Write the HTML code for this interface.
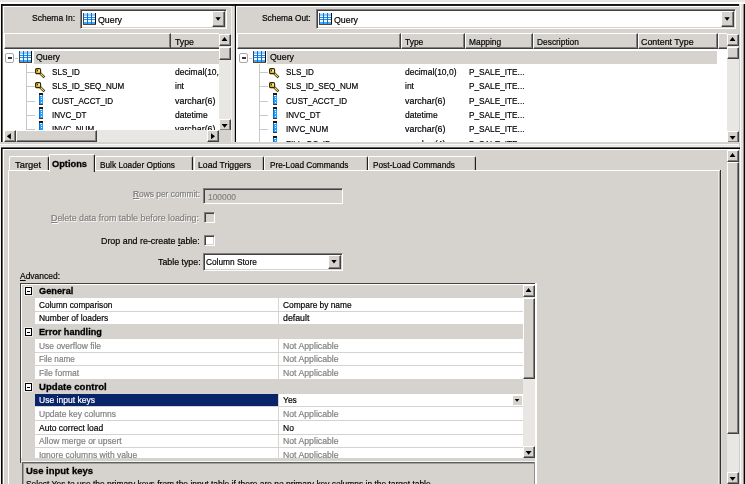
<!DOCTYPE html>
<html><head><meta charset="utf-8"><style>
*{margin:0;padding:0;box-sizing:border-box}
html,body{width:745px;height:484px;overflow:hidden;background:#d6d3ce;position:relative}
div{position:absolute}
svg{display:block}
.t{font-family:"Liberation Sans",sans-serif;font-size:9.5px;line-height:11px;transform-origin:0 0;white-space:nowrap;color:#000;-webkit-text-stroke:0.2px #000}
.b{font-weight:bold;-webkit-text-stroke-width:0.3px}
.dis{color:#808080;-webkit-text-stroke-color:#808080;text-shadow:1px 1px 0 #fff}
.gr{color:#808080;-webkit-text-stroke-color:#808080}
.wh{background:#fff}
.blk{background:#000}
.dk{background:#404040}
.face{background:#d6d3ce}
.btn{background:#d6d3ce;border-top:1px solid #fff;border-left:1px solid #fff;border-right:1px solid #404040;border-bottom:1px solid #404040;box-shadow:inset -1px -1px 0 #808080}
.track{background:#e8e7e4}
.hdr{background:#d6d3ce;border-top:1px solid #fff;border-left:1px solid #fff;border-right:1px solid #404040;border-bottom:1px solid #404040;box-shadow:inset -1px -1px 0 #808080}
</style></head><body>
<div class="" style="left:0px;top:0px;width:745px;height:2px;background:#e8e6e2"></div>
<div class="wh" style="left:0px;top:2px;width:745px;height:2px;"></div>
<div class="" style="left:1px;top:4px;width:739px;height:1px;background:#141414"></div>
<div class="" style="left:1px;top:5px;width:739px;height:1px;background:#202020"></div>
<div class="" style="left:0px;top:4px;width:1px;height:480px;background:#f4f2ee"></div>
<div class="blk" style="left:1px;top:4px;width:1px;height:139px;"></div>
<div class="" style="left:2px;top:6px;width:1px;height:137px;background:#686860"></div>
<div class="blk" style="left:1px;top:147px;width:1px;height:337px;"></div>
<div class="" style="left:2px;top:149px;width:1px;height:335px;background:#686860"></div>
<div class="wh" style="left:3px;top:6px;width:229px;height:1px;"></div>
<div class="wh" style="left:3px;top:6px;width:1px;height:137px;"></div>
<div class="t " style="left:32px;top:12.0px;transform:scaleX(0.8947);">Schema In:</div>
<div class="" style="left:80px;top:9px;width:147px;height:20px;background:#fff;border-top:1px solid #808080;border-left:1px solid #808080;border-right:1px solid #fff;border-bottom:1px solid #fff;box-shadow:inset 1px 1px 0 #404040, inset -1px -1px 0 #d6d3ce"></div>
<div class="btn" style="left:212px;top:11px;width:13px;height:16px;"><svg style="position:absolute;left:0;top:0" width="11" height="14"><path d="M2.4 5.2H7.8L5.1 8.8z" fill="#000"/></svg></div>
<div class="" style="left:83px;top:13px;width:13px;height:12px;"><svg width="13" height="12" viewBox="0 0 13 12" shape-rendering="crispEdges"><rect x="0" y="0" width="13" height="12" fill="#eef8ff"/><rect x="1" y="0" width="11" height="1" fill="#d0e4f4"/><rect x="1" y="1" width="11" height="2" fill="#90ccff"/><rect x="1" y="4" width="11" height="1" fill="#1890ff"/><rect x="1" y="6" width="11" height="1" fill="#1890ff"/><rect x="1" y="9" width="11" height="2" fill="#38aaff"/><rect x="4" y="0" width="1" height="11" fill="#1a6cc8"/><rect x="8" y="0" width="1" height="11" fill="#1a6cc8"/><rect x="0" y="0" width="1" height="12" fill="#384858"/><rect x="12" y="0" width="1" height="12" fill="#101010"/><rect x="0" y="11" width="13" height="1" fill="#6a4028"/></svg></div>
<div class="t " style="left:98px;top:14.0px;transform:scaleX(0.9275);">Query</div>
<div class="" style="left:4px;top:33px;width:215px;height:16px;background:#d6d3ce;border-top:1px solid #fff;border-bottom:1px solid #404040;box-shadow:inset 0 -1px 0 #808080"></div>
<div class="hdr" style="left:4px;top:33px;width:167px;height:16px;"></div>
<div class="t " style="left:175px;top:35.5px;transform:scaleX(0.9219);">Type</div>
<div class="wh" style="left:4px;top:49px;width:215px;height:81px;"></div>
<div class="" style="left:34px;top:51px;width:185px;height:13px;background:#d6d3ce"></div>
<div class="" style="left:5px;top:53px;width:9px;height:10px;border:1px solid #a8a8a8;background:#fff;border-radius:2px"><div style="left:2px;top:3px;width:4px;height:2px;background:#383838"></div></div>
<div class="" style="left:15px;top:58px;width:3px;height:1px;background:#c8c8c8"></div>
<div class="" style="left:19px;top:51px;width:13px;height:12px;"><svg width="13" height="12" viewBox="0 0 13 12" shape-rendering="crispEdges"><rect x="0" y="0" width="13" height="12" fill="#eef8ff"/><rect x="1" y="0" width="11" height="1" fill="#d0e4f4"/><rect x="1" y="1" width="11" height="2" fill="#90ccff"/><rect x="1" y="4" width="11" height="1" fill="#1890ff"/><rect x="1" y="6" width="11" height="1" fill="#1890ff"/><rect x="1" y="9" width="11" height="2" fill="#38aaff"/><rect x="4" y="0" width="1" height="11" fill="#1a6cc8"/><rect x="8" y="0" width="1" height="11" fill="#1a6cc8"/><rect x="0" y="0" width="1" height="12" fill="#384858"/><rect x="12" y="0" width="1" height="12" fill="#101010"/><rect x="0" y="11" width="13" height="1" fill="#6a4028"/></svg></div>
<div class="t " style="left:36px;top:51.0px;transform:scaleX(0.9275);">Query</div>
<div style="left:4px;top:64px;width:215px;height:66px;overflow:hidden">
<div class="" style="left:22px;top:0px;width:1px;height:66px;background:#c8c8c8"></div>
<div class="" style="left:23px;top:8px;width:8px;height:1px;background:#c8c8c8"></div>
<div class="" style="left:31px;top:4px;width:11px;height:11px;"><svg width="11" height="11" viewBox="0 0 11 11"><path d="M4.3 4.3L9.4 9.4" stroke="#282018" stroke-width="2.5"/><path d="M4.5 4.5L8.9 8.9" stroke="#f8e040" stroke-width="1.2"/><rect x="0.6" y="0.6" width="5" height="5" rx="1.2" fill="#f0c000" stroke="#282018" stroke-width="1.1"/><rect x="1.9" y="1.9" width="1.4" height="1.4" fill="#302810"/><rect x="3.3" y="1.5" width="1.5" height="2.2" fill="#fffae0"/></svg></div>
<div class="t " style="left:48px;top:2.0999999999999996px;transform:scaleX(0.8502);">SLS_ID</div>
<div class="t " style="left:171px;top:2.0999999999999996px;transform:scaleX(0.8950);">decimal(10,0)</div>
<div class="" style="left:23px;top:22px;width:8px;height:1px;background:#c8c8c8"></div>
<div class="" style="left:31px;top:18px;width:11px;height:11px;"><svg width="11" height="11" viewBox="0 0 11 11"><path d="M4.3 4.3L9.4 9.4" stroke="#282018" stroke-width="2.5"/><path d="M4.5 4.5L8.9 8.9" stroke="#f8e040" stroke-width="1.2"/><rect x="0.6" y="0.6" width="5" height="5" rx="1.2" fill="#f0c000" stroke="#282018" stroke-width="1.1"/><rect x="1.9" y="1.9" width="1.4" height="1.4" fill="#302810"/><rect x="3.3" y="1.5" width="1.5" height="2.2" fill="#fffae0"/></svg></div>
<div class="t " style="left:48px;top:16.1px;transform:scaleX(0.8503);">SLS_ID_SEQ_NUM</div>
<div class="t " style="left:171px;top:16.1px;transform:scaleX(0.8950);">int</div>
<div class="" style="left:23px;top:37px;width:8px;height:1px;background:#c8c8c8"></div>
<div class="" style="left:35px;top:29px;width:4px;height:12px;"><svg width="4" height="12" viewBox="0 0 4 12" shape-rendering="crispEdges"><rect x="0" y="0" width="4" height="12" fill="#20a0ff"/><rect x="0" y="2" width="1" height="9" fill="#0a70d0"/><rect x="0" y="0" width="4" height="2" fill="#181818"/><rect x="1" y="2" width="2" height="1" fill="#ffffff"/><rect x="2" y="4" width="1" height="1" fill="#ffffff"/><rect x="2" y="6" width="1" height="1" fill="#ffffff"/><rect x="2" y="9" width="1" height="1" fill="#ffffff"/><rect x="0" y="11" width="4" height="1" fill="#503020"/></svg></div>
<div class="t " style="left:48px;top:31.1px;transform:scaleX(0.8503);">CUST_ACCT_ID</div>
<div class="t " style="left:171px;top:31.1px;transform:scaleX(0.9354);">varchar(6)</div>
<div class="" style="left:23px;top:51px;width:8px;height:1px;background:#c8c8c8"></div>
<div class="" style="left:35px;top:43px;width:4px;height:12px;"><svg width="4" height="12" viewBox="0 0 4 12" shape-rendering="crispEdges"><rect x="0" y="0" width="4" height="12" fill="#20a0ff"/><rect x="0" y="2" width="1" height="9" fill="#0a70d0"/><rect x="0" y="0" width="4" height="2" fill="#181818"/><rect x="1" y="2" width="2" height="1" fill="#ffffff"/><rect x="2" y="4" width="1" height="1" fill="#ffffff"/><rect x="2" y="6" width="1" height="1" fill="#ffffff"/><rect x="2" y="9" width="1" height="1" fill="#ffffff"/><rect x="0" y="11" width="4" height="1" fill="#503020"/></svg></div>
<div class="t " style="left:48px;top:45.1px;transform:scaleX(0.8502);">INVC_DT</div>
<div class="t " style="left:171px;top:45.1px;transform:scaleX(0.8950);">datetime</div>
<div class="" style="left:23px;top:65px;width:8px;height:1px;background:#c8c8c8"></div>
<div class="" style="left:35px;top:57px;width:4px;height:12px;"><svg width="4" height="12" viewBox="0 0 4 12" shape-rendering="crispEdges"><rect x="0" y="0" width="4" height="12" fill="#20a0ff"/><rect x="0" y="2" width="1" height="9" fill="#0a70d0"/><rect x="0" y="0" width="4" height="2" fill="#181818"/><rect x="1" y="2" width="2" height="1" fill="#ffffff"/><rect x="2" y="4" width="1" height="1" fill="#ffffff"/><rect x="2" y="6" width="1" height="1" fill="#ffffff"/><rect x="2" y="9" width="1" height="1" fill="#ffffff"/><rect x="0" y="11" width="4" height="1" fill="#503020"/></svg></div>
<div class="t " style="left:48px;top:59.099999999999994px;transform:scaleX(0.8502);">INVC_NUM</div>
<div class="t " style="left:171px;top:59.099999999999994px;transform:scaleX(0.9354);">varchar(6)</div>
</div>
<div class="track" style="left:219px;top:34px;width:12px;height:97px;"></div>
<div class="btn" style="left:219px;top:34px;width:12px;height:12px;"><svg style="position:absolute;left:0;top:0" width="10" height="10"><path d="M4.5 1.9L7.4 5.9H1.6z" fill="#000"/></svg></div>
<div class="btn" style="left:219px;top:119px;width:12px;height:12px;"><svg style="position:absolute;left:0;top:0" width="10" height="10"><path d="M1.6 3.9H7.6L4.6 7.8z" fill="#000"/></svg></div>
<div class="btn" style="left:219px;top:47px;width:12px;height:13px;"></div>
<div class="track" style="left:4px;top:130px;width:215px;height:12px;"></div>
<div class="btn" style="left:4px;top:130px;width:12px;height:12px;"><svg style="position:absolute;left:0;top:0" width="10" height="10"><path d="M1.8 5.35L5.9 2.3V8.4z" fill="#000"/></svg></div>
<div class="btn" style="left:207px;top:130px;width:12px;height:12px;"><svg style="position:absolute;left:0;top:0" width="10" height="10"><path d="M7 5.3L3 2.3V8.3z" fill="#000"/></svg></div>
<div class="btn" style="left:16px;top:130px;width:81px;height:12px;"></div>
<div class="face" style="left:219px;top:130px;width:12px;height:13px;"></div>
<div class="" style="left:231px;top:6px;width:1px;height:137px;background:#f0f0ee"></div>
<div class="" style="left:232px;top:6px;width:1px;height:137px;background:#dcdad6"></div>
<div class="" style="left:233px;top:6px;width:1px;height:137px;background:#e4e2de"></div>
<div class="" style="left:234px;top:6px;width:1px;height:137px;background:#b8b8b8"></div>
<div class="blk" style="left:235px;top:4px;width:1px;height:143px;"></div>
<div class="wh" style="left:236px;top:6px;width:503px;height:1px;"></div>
<div class="wh" style="left:236px;top:6px;width:1px;height:137px;"></div>
<div class="t " style="left:262px;top:12.0px;transform:scaleX(0.8782);">Schema Out:</div>
<div class="" style="left:316px;top:9px;width:420px;height:20px;background:#fff;border-top:1px solid #808080;border-left:1px solid #808080;border-right:1px solid #fff;border-bottom:1px solid #fff;box-shadow:inset 1px 1px 0 #404040, inset -1px -1px 0 #d6d3ce"></div>
<div class="btn" style="left:721px;top:11px;width:13px;height:16px;"><svg style="position:absolute;left:0;top:0" width="11" height="14"><path d="M2.4 5.2H7.8L5.1 8.8z" fill="#000"/></svg></div>
<div class="" style="left:319px;top:13px;width:13px;height:12px;"><svg width="13" height="12" viewBox="0 0 13 12" shape-rendering="crispEdges"><rect x="0" y="0" width="13" height="12" fill="#eef8ff"/><rect x="1" y="0" width="11" height="1" fill="#d0e4f4"/><rect x="1" y="1" width="11" height="2" fill="#90ccff"/><rect x="1" y="4" width="11" height="1" fill="#1890ff"/><rect x="1" y="6" width="11" height="1" fill="#1890ff"/><rect x="1" y="9" width="11" height="2" fill="#38aaff"/><rect x="4" y="0" width="1" height="11" fill="#1a6cc8"/><rect x="8" y="0" width="1" height="11" fill="#1a6cc8"/><rect x="0" y="0" width="1" height="12" fill="#384858"/><rect x="12" y="0" width="1" height="12" fill="#101010"/><rect x="0" y="11" width="13" height="1" fill="#6a4028"/></svg></div>
<div class="t " style="left:334px;top:14.0px;transform:scaleX(0.9275);">Query</div>
<div class="hdr" style="left:237px;top:33px;width:490px;height:16px;"></div>
<div class="hdr" style="left:237px;top:33px;width:164px;height:16px;"></div>
<div class="hdr" style="left:401px;top:33px;width:64px;height:16px;"></div>
<div class="hdr" style="left:465px;top:33px;width:68px;height:16px;"></div>
<div class="hdr" style="left:533px;top:33px;width:105px;height:16px;"></div>
<div class="hdr" style="left:638px;top:33px;width:80px;height:16px;"></div>
<div class="" style="left:718px;top:33px;width:9px;height:16px;background:#d6d3ce;border-top:1px solid #fff;border-left:1px solid #fff;border-bottom:1px solid #404040;box-shadow:inset 0 -1px 0 #808080"></div>
<div class="t " style="left:405px;top:35.5px;transform:scaleX(0.8879);">Type</div>
<div class="t " style="left:469px;top:35.5px;transform:scaleX(0.8833);">Mapping</div>
<div class="t " style="left:537px;top:35.5px;transform:scaleX(0.8815);">Description</div>
<div class="t " style="left:641px;top:35.5px;transform:scaleX(0.9336);">Content Type</div>
<div class="wh" style="left:237px;top:49px;width:490px;height:94px;"></div>
<div class="" style="left:267px;top:51px;width:450px;height:13px;background:#d6d3ce"></div>
<div class="" style="left:239px;top:53px;width:9px;height:10px;border:1px solid #a8a8a8;background:#fff;border-radius:2px"><div style="left:2px;top:3px;width:4px;height:2px;background:#383838"></div></div>
<div class="" style="left:249px;top:58px;width:3px;height:1px;background:#c8c8c8"></div>
<div class="" style="left:253px;top:51px;width:13px;height:12px;"><svg width="13" height="12" viewBox="0 0 13 12" shape-rendering="crispEdges"><rect x="0" y="0" width="13" height="12" fill="#eef8ff"/><rect x="1" y="0" width="11" height="1" fill="#d0e4f4"/><rect x="1" y="1" width="11" height="2" fill="#90ccff"/><rect x="1" y="4" width="11" height="1" fill="#1890ff"/><rect x="1" y="6" width="11" height="1" fill="#1890ff"/><rect x="1" y="9" width="11" height="2" fill="#38aaff"/><rect x="4" y="0" width="1" height="11" fill="#1a6cc8"/><rect x="8" y="0" width="1" height="11" fill="#1a6cc8"/><rect x="0" y="0" width="1" height="12" fill="#384858"/><rect x="12" y="0" width="1" height="12" fill="#101010"/><rect x="0" y="11" width="13" height="1" fill="#6a4028"/></svg></div>
<div class="t " style="left:270px;top:51.0px;transform:scaleX(0.9275);">Query</div>
<div style="left:237px;top:64px;width:490px;height:79px;overflow:hidden">
<div class="" style="left:22px;top:0px;width:1px;height:79px;background:#c8c8c8"></div>
<div class="" style="left:23px;top:8px;width:8px;height:1px;background:#c8c8c8"></div>
<div class="" style="left:32px;top:4px;width:11px;height:11px;"><svg width="11" height="11" viewBox="0 0 11 11"><path d="M4.3 4.3L9.4 9.4" stroke="#282018" stroke-width="2.5"/><path d="M4.5 4.5L8.9 8.9" stroke="#f8e040" stroke-width="1.2"/><rect x="0.6" y="0.6" width="5" height="5" rx="1.2" fill="#f0c000" stroke="#282018" stroke-width="1.1"/><rect x="1.9" y="1.9" width="1.4" height="1.4" fill="#302810"/><rect x="3.3" y="1.5" width="1.5" height="2.2" fill="#fffae0"/></svg></div>
<div class="t " style="left:49px;top:2.0999999999999996px;transform:scaleX(0.8502);">SLS_ID</div>
<div class="t " style="left:168px;top:2.0999999999999996px;transform:scaleX(0.8950);">decimal(10,0)</div>
<div class="t " style="left:232px;top:2.0999999999999996px;transform:scaleX(0.8685);">P_SALE_ITE...</div>
<div class="" style="left:23px;top:22px;width:8px;height:1px;background:#c8c8c8"></div>
<div class="" style="left:32px;top:18px;width:11px;height:11px;"><svg width="11" height="11" viewBox="0 0 11 11"><path d="M4.3 4.3L9.4 9.4" stroke="#282018" stroke-width="2.5"/><path d="M4.5 4.5L8.9 8.9" stroke="#f8e040" stroke-width="1.2"/><rect x="0.6" y="0.6" width="5" height="5" rx="1.2" fill="#f0c000" stroke="#282018" stroke-width="1.1"/><rect x="1.9" y="1.9" width="1.4" height="1.4" fill="#302810"/><rect x="3.3" y="1.5" width="1.5" height="2.2" fill="#fffae0"/></svg></div>
<div class="t " style="left:49px;top:16.1px;transform:scaleX(0.8503);">SLS_ID_SEQ_NUM</div>
<div class="t " style="left:168px;top:16.1px;transform:scaleX(0.8950);">int</div>
<div class="t " style="left:232px;top:16.1px;transform:scaleX(0.8681);">P_SALE_ITE...</div>
<div class="" style="left:23px;top:37px;width:8px;height:1px;background:#c8c8c8"></div>
<div class="" style="left:36px;top:29px;width:4px;height:12px;"><svg width="4" height="12" viewBox="0 0 4 12" shape-rendering="crispEdges"><rect x="0" y="0" width="4" height="12" fill="#20a0ff"/><rect x="0" y="2" width="1" height="9" fill="#0a70d0"/><rect x="0" y="0" width="4" height="2" fill="#181818"/><rect x="1" y="2" width="2" height="1" fill="#ffffff"/><rect x="2" y="4" width="1" height="1" fill="#ffffff"/><rect x="2" y="6" width="1" height="1" fill="#ffffff"/><rect x="2" y="9" width="1" height="1" fill="#ffffff"/><rect x="0" y="11" width="4" height="1" fill="#503020"/></svg></div>
<div class="t " style="left:49px;top:31.1px;transform:scaleX(0.8503);">CUST_ACCT_ID</div>
<div class="t " style="left:168px;top:31.1px;transform:scaleX(0.9354);">varchar(6)</div>
<div class="t " style="left:232px;top:31.1px;transform:scaleX(0.8681);">P_SALE_ITE...</div>
<div class="" style="left:23px;top:51px;width:8px;height:1px;background:#c8c8c8"></div>
<div class="" style="left:36px;top:43px;width:4px;height:12px;"><svg width="4" height="12" viewBox="0 0 4 12" shape-rendering="crispEdges"><rect x="0" y="0" width="4" height="12" fill="#20a0ff"/><rect x="0" y="2" width="1" height="9" fill="#0a70d0"/><rect x="0" y="0" width="4" height="2" fill="#181818"/><rect x="1" y="2" width="2" height="1" fill="#ffffff"/><rect x="2" y="4" width="1" height="1" fill="#ffffff"/><rect x="2" y="6" width="1" height="1" fill="#ffffff"/><rect x="2" y="9" width="1" height="1" fill="#ffffff"/><rect x="0" y="11" width="4" height="1" fill="#503020"/></svg></div>
<div class="t " style="left:49px;top:45.1px;transform:scaleX(0.8502);">INVC_DT</div>
<div class="t " style="left:168px;top:45.1px;transform:scaleX(0.8950);">datetime</div>
<div class="t " style="left:232px;top:45.1px;transform:scaleX(0.8681);">P_SALE_ITE...</div>
<div class="" style="left:23px;top:65px;width:8px;height:1px;background:#c8c8c8"></div>
<div class="" style="left:36px;top:57px;width:4px;height:12px;"><svg width="4" height="12" viewBox="0 0 4 12" shape-rendering="crispEdges"><rect x="0" y="0" width="4" height="12" fill="#20a0ff"/><rect x="0" y="2" width="1" height="9" fill="#0a70d0"/><rect x="0" y="0" width="4" height="2" fill="#181818"/><rect x="1" y="2" width="2" height="1" fill="#ffffff"/><rect x="2" y="4" width="1" height="1" fill="#ffffff"/><rect x="2" y="6" width="1" height="1" fill="#ffffff"/><rect x="2" y="9" width="1" height="1" fill="#ffffff"/><rect x="0" y="11" width="4" height="1" fill="#503020"/></svg></div>
<div class="t " style="left:49px;top:59.099999999999994px;transform:scaleX(0.8502);">INVC_NUM</div>
<div class="t " style="left:168px;top:59.099999999999994px;transform:scaleX(0.9354);">varchar(6)</div>
<div class="t " style="left:232px;top:59.099999999999994px;transform:scaleX(0.8681);">P_SALE_ITE...</div>
<div class="" style="left:23px;top:80px;width:8px;height:1px;background:#c8c8c8"></div>
<div class="" style="left:36px;top:72px;width:4px;height:12px;"><svg width="4" height="12" viewBox="0 0 4 12" shape-rendering="crispEdges"><rect x="0" y="0" width="4" height="12" fill="#20a0ff"/><rect x="0" y="2" width="1" height="9" fill="#0a70d0"/><rect x="0" y="0" width="4" height="2" fill="#181818"/><rect x="1" y="2" width="2" height="1" fill="#ffffff"/><rect x="2" y="4" width="1" height="1" fill="#ffffff"/><rect x="2" y="6" width="1" height="1" fill="#ffffff"/><rect x="2" y="9" width="1" height="1" fill="#ffffff"/><rect x="0" y="11" width="4" height="1" fill="#503020"/></svg></div>
<div class="t " style="left:49px;top:74.1px;transform:scaleX(0.8503);">FILL_DC_ID</div>
<div class="t " style="left:168px;top:74.1px;transform:scaleX(0.9354);">varchar(4)</div>
<div class="t " style="left:232px;top:74.1px;transform:scaleX(0.8681);">P_SALE_ITE...</div>
</div>
<div class="track" style="left:727px;top:34px;width:12px;height:109px;"></div>
<div class="btn" style="left:727px;top:34px;width:12px;height:12px;"><svg style="position:absolute;left:0;top:0" width="10" height="10"><path d="M4.5 1.9L7.4 5.9H1.6z" fill="#000"/></svg></div>
<div class="btn" style="left:727px;top:131px;width:12px;height:12px;"><svg style="position:absolute;left:0;top:0" width="10" height="10"><path d="M1.6 3.9H7.6L4.6 7.8z" fill="#000"/></svg></div>
<div class="btn" style="left:727px;top:47px;width:12px;height:12px;"></div>
<div class="" style="left:0px;top:142px;width:740px;height:1px;background:#d8d4d0"></div>
<div class="" style="left:0px;top:143px;width:740px;height:1px;background:#d4d0cc"></div>
<div class="" style="left:0px;top:144px;width:740px;height:1px;background:#f8f8f6"></div>
<div class="" style="left:0px;top:145px;width:740px;height:1px;background:#e8e6e2"></div>
<div class="" style="left:0px;top:146px;width:740px;height:1px;background:#f0eeea"></div>
<div class="" style="left:739px;top:4px;width:1px;height:480px;background:#d0ccc8"></div>
<div class="" style="left:740px;top:4px;width:1px;height:480px;background:#fafafa"></div>
<div class="" style="left:741px;top:4px;width:2px;height:480px;background:#e4e1dc"></div>
<div class="" style="left:743px;top:4px;width:1px;height:480px;background:#909090"></div>
<div class="blk" style="left:744px;top:4px;width:1px;height:480px;"></div>
<div class="" style="left:1px;top:147px;width:739px;height:1px;background:#606060"></div>
<div class="blk" style="left:1px;top:148px;width:739px;height:1px;"></div>
<div class="wh" style="left:3px;top:149px;width:736px;height:1px;"></div>
<div class="wh" style="left:3px;top:149px;width:1px;height:335px;"></div>
<div class="" style="left:8px;top:170px;width:712px;height:314px;border-top:1px solid #fff;border-left:1px solid #fff"></div>
<div class="" style="left:718px;top:171px;width:1px;height:313px;background:#eae8e2"></div>
<div class="" style="left:719px;top:171px;width:1px;height:313px;background:#a8a8a8"></div>
<div class="" style="left:720px;top:170px;width:1px;height:314px;background:#303030"></div>
<div class="" style="left:721px;top:170px;width:1px;height:314px;background:#dedcd8"></div>
<div class="" style="left:9px;top:156px;width:40px;height:14px;background:#d6d3ce;border-top:1px solid #fff;border-left:1px solid #fff;border-right:1px solid #202020;box-shadow:inset -1px 0 0 #b0b0b0;border-top-left-radius:2px;border-top-right-radius:2px"></div>
<div class="t " style="left:15px;top:159.2px;transform:scaleX(0.9846);">Target</div>
<div class="" style="left:95px;top:156px;width:98px;height:14px;background:#d6d3ce;border-top:1px solid #fff;border-left:1px solid #fff;border-right:1px solid #202020;box-shadow:inset -1px 0 0 #b0b0b0;border-top-left-radius:2px;border-top-right-radius:2px"></div>
<div class="t " style="left:100px;top:159.2px;transform:scaleX(0.8711);">Bulk Loader Options</div>
<div class="" style="left:194px;top:156px;width:70px;height:14px;background:#d6d3ce;border-top:1px solid #fff;border-left:1px solid #fff;border-right:1px solid #202020;box-shadow:inset -1px 0 0 #b0b0b0;border-top-left-radius:2px;border-top-right-radius:2px"></div>
<div class="t " style="left:198px;top:159.2px;transform:scaleX(0.9123);">Load Triggers</div>
<div class="" style="left:264px;top:156px;width:104px;height:14px;background:#d6d3ce;border-top:1px solid #fff;border-left:1px solid #fff;border-right:1px solid #202020;box-shadow:inset -1px 0 0 #b0b0b0;border-top-left-radius:2px;border-top-right-radius:2px"></div>
<div class="t " style="left:270px;top:159.2px;transform:scaleX(0.8694);">Pre-Load Commands</div>
<div class="" style="left:368px;top:156px;width:108px;height:14px;background:#d6d3ce;border-top:1px solid #fff;border-left:1px solid #fff;border-right:1px solid #202020;box-shadow:inset -1px 0 0 #b0b0b0;border-top-left-radius:2px;border-top-right-radius:2px"></div>
<div class="t " style="left:373px;top:159.2px;transform:scaleX(0.8674);">Post-Load Commands</div>
<div class="" style="left:49px;top:154px;width:46px;height:18px;background:#d6d3ce;border-top:1px solid #fff;border-left:1px solid #fff;border-right:1px solid #202020;box-shadow:inset -1px 0 0 #b0b0b0;border-top-left-radius:2px;border-top-right-radius:2px"></div>
<div class="t b" style="left:52px;top:158.1px;transform:scaleX(0.9752);">Options</div>
<div class="t dis" style="left:133px;top:188.0px;transform:scaleX(0.8812);"><u>R</u>ows per commit:</div>
<div class="" style="left:203px;top:188px;width:140px;height:16px;background:#d6d3ce;border-top:1px solid #808080;border-left:1px solid #808080;border-right:1px solid #fff;border-bottom:1px solid #fff;box-shadow:inset 1px 1px 0 #404040, inset -1px -1px 0 #d6d3ce"></div>
<div class="t gr" style="left:208px;top:190.5px;transform:scaleX(0.8832);">100000</div>
<div class="t dis" style="left:51px;top:211.5px;transform:scaleX(0.9309);"><u>D</u>elete data from table before loading:</div>
<div class="" style="left:204px;top:212px;width:11px;height:11px;background:#d6d3ce;border-top:1px solid #808080;border-left:1px solid #808080;border-right:1px solid #fff;border-bottom:1px solid #fff;box-shadow:inset 1px 1px 0 #404040, inset -1px -1px 0 #d6d3ce"></div>
<div class="t " style="left:101px;top:234.5px;transform:scaleX(0.9344);">Drop and re-create <u>t</u>able:</div>
<div class="" style="left:204px;top:235px;width:11px;height:11px;background:#fff;border-top:1px solid #808080;border-left:1px solid #808080;border-right:1px solid #fff;border-bottom:1px solid #fff;box-shadow:inset 1px 1px 0 #404040, inset -1px -1px 0 #d6d3ce"></div>
<div class="t " style="left:158px;top:256.0px;transform:scaleX(0.9270);">Table type:</div>
<div class="" style="left:203px;top:253px;width:140px;height:18px;background:#fff;border-top:1px solid #808080;border-left:1px solid #808080;border-right:1px solid #fff;border-bottom:1px solid #fff;box-shadow:inset 1px 1px 0 #404040, inset -1px -1px 0 #d6d3ce"></div>
<div class="btn" style="left:328px;top:255px;width:13px;height:14px;"><svg style="position:absolute;left:0;top:0" width="11" height="12"><path d="M2.3 4H7.7L5 7.4z" fill="#000"/></svg></div>
<div class="t " style="left:206px;top:256.0px;transform:scaleX(0.8744);">Column Store</div>
<div class="t " style="left:20px;top:270.0px;transform:scaleX(0.8907);"><u>A</u>dvanced:</div>
<div class="" style="left:20px;top:283px;width:516px;height:180px;border-top:1px solid #404040;border-left:1px solid #404040"></div>
<div class="wh" style="left:21px;top:284px;width:514px;height:1px;"></div>
<div class="wh" style="left:21px;top:284px;width:1px;height:178px;"></div>
<div style="left:22px;top:285px;width:501px;height:174px;overflow:hidden;background:#d6d3ce">
<div class="" style="left:3px;top:2px;width:7px;height:8px;border:1px solid #000;background:#fff;box-shadow:0 0 0 1px #eeece8"><div style="left:1px;top:3px;width:3px;height:1px;background:#000"></div></div>
<div class="t b" style="left:17px;top:0.09999999999999964px;transform:scaleX(0.9720);">General</div>
<div class="wh" style="left:13px;top:13px;width:488px;height:13px;"></div>
<div class="" style="left:256px;top:13px;width:1px;height:14px;background:#d8d5d0"></div>
<div class="t " style="left:17px;top:13.760000000000002px;transform:scaleX(0.8676);">Column comparison</div>
<div class="t " style="left:261px;top:13.760000000000002px;transform:scaleX(0.8777);">Compare by name</div>
<div class="wh" style="left:13px;top:27px;width:488px;height:12px;"></div>
<div class="" style="left:256px;top:27px;width:1px;height:13px;background:#d8d5d0"></div>
<div class="t " style="left:17px;top:27.42px;transform:scaleX(0.8867);">Number of loaders</div>
<div class="t " style="left:261px;top:27.42px;transform:scaleX(0.9253);">default</div>
<div class="" style="left:3px;top:43px;width:7px;height:8px;border:1px solid #000;background:#fff;box-shadow:0 0 0 1px #eeece8"><div style="left:1px;top:3px;width:3px;height:1px;background:#000"></div></div>
<div class="t b" style="left:17px;top:41.08px;transform:scaleX(0.9595);">Error handling</div>
<div class="wh" style="left:13px;top:54px;width:488px;height:13px;"></div>
<div class="" style="left:256px;top:54px;width:1px;height:14px;background:#d8d5d0"></div>
<div class="t gr" style="left:17px;top:54.74px;transform:scaleX(0.8895);">Use overflow file</div>
<div class="t gr" style="left:261px;top:54.74px;transform:scaleX(0.9155);">Not Applicable</div>
<div class="wh" style="left:13px;top:68px;width:488px;height:12px;"></div>
<div class="" style="left:256px;top:68px;width:1px;height:13px;background:#d8d5d0"></div>
<div class="t gr" style="left:17px;top:68.4px;transform:scaleX(0.8557);">File name</div>
<div class="t gr" style="left:261px;top:68.4px;transform:scaleX(0.9155);">Not Applicable</div>
<div class="wh" style="left:13px;top:81px;width:488px;height:13px;"></div>
<div class="" style="left:256px;top:81px;width:1px;height:14px;background:#d8d5d0"></div>
<div class="t gr" style="left:17px;top:82.06px;transform:scaleX(0.8950);">File format</div>
<div class="t gr" style="left:261px;top:82.06px;transform:scaleX(0.9155);">Not Applicable</div>
<div class="" style="left:3px;top:98px;width:7px;height:8px;border:1px solid #000;background:#fff;box-shadow:0 0 0 1px #eeece8"><div style="left:1px;top:3px;width:3px;height:1px;background:#000"></div></div>
<div class="t b" style="left:17px;top:95.72px;transform:scaleX(1.0100);">Update control</div>
<div class="wh" style="left:13px;top:109px;width:488px;height:12px;"></div>
<div class="" style="left:256px;top:109px;width:1px;height:13px;background:#d8d5d0"></div>
<div class="" style="left:13px;top:109px;width:243px;height:12px;background:#0a246a"></div>
<div class="t " style="left:17px;top:109.38px;transform:scaleX(0.8987);color:#fff;-webkit-text-stroke-color:#fff">Use input keys</div>
<div class="" style="left:490px;top:110px;width:10px;height:10px;background:#d6d3ce;border-top:1px solid #fff;border-left:1px solid #fff"><svg style="position:absolute;left:0;top:0" width="9" height="9"><path d="M1.7 3H6.4L4.05 5.8z" fill="#000"/></svg></div>
<div class="t " style="left:261px;top:109.38px;transform:scaleX(0.8950);">Yes</div>
<div class="wh" style="left:13px;top:122px;width:488px;height:13px;"></div>
<div class="" style="left:256px;top:122px;width:1px;height:14px;background:#d8d5d0"></div>
<div class="t gr" style="left:17px;top:123.03999999999999px;transform:scaleX(0.8950);">Update key columns</div>
<div class="t gr" style="left:261px;top:123.03999999999999px;transform:scaleX(0.9155);">Not Applicable</div>
<div class="wh" style="left:13px;top:136px;width:488px;height:13px;"></div>
<div class="" style="left:256px;top:136px;width:1px;height:14px;background:#d8d5d0"></div>
<div class="t " style="left:17px;top:136.7px;transform:scaleX(0.8950);">Auto correct load</div>
<div class="t " style="left:261px;top:136.7px;transform:scaleX(0.8950);">No</div>
<div class="wh" style="left:13px;top:150px;width:488px;height:12px;"></div>
<div class="" style="left:256px;top:150px;width:1px;height:13px;background:#d8d5d0"></div>
<div class="t gr" style="left:17px;top:150.36px;transform:scaleX(0.8950);">Allow merge or upsert</div>
<div class="t gr" style="left:261px;top:150.36px;transform:scaleX(0.9155);">Not Applicable</div>
<div class="wh" style="left:13px;top:163px;width:488px;height:13px;"></div>
<div class="" style="left:256px;top:163px;width:1px;height:14px;background:#d8d5d0"></div>
<div class="t gr" style="left:17px;top:164.02px;transform:scaleX(0.8950);">Ignore columns with value</div>
<div class="t gr" style="left:261px;top:164.02px;transform:scaleX(0.9155);">Not Applicable</div>
</div>
<div class="track" style="left:523px;top:285px;width:12px;height:173px;"></div>
<div class="btn" style="left:523px;top:285px;width:12px;height:12px;"><svg style="position:absolute;left:0;top:0" width="10" height="10"><path d="M4.5 1.9L7.4 5.9H1.6z" fill="#000"/></svg></div>
<div class="btn" style="left:523px;top:446px;width:12px;height:12px;"><svg style="position:absolute;left:0;top:0" width="10" height="10"><path d="M1.6 3.9H7.6L4.6 7.8z" fill="#000"/></svg></div>
<div class="btn" style="left:523px;top:298px;width:12px;height:81px;"></div>
<div class="wh" style="left:535px;top:283px;width:2px;height:201px;"></div>
<div class="" style="left:21px;top:458px;width:514px;height:3px;background:#d6d3ce"></div>
<div class="" style="left:21px;top:461px;width:514px;height:1px;background:#f4f4f4"></div>
<div class="" style="left:22px;top:462px;width:513px;height:22px;border-top:1px solid #606060;border-left:1px solid #606060;border-right:1px solid #909090;background:#d6d3ce;box-shadow:inset 1px 1px 0 #a0a0a0"></div>
<div class="t b" style="left:26px;top:465.0px;transform:scaleX(0.9991);">Use input keys</div>
<div class="t " style="left:26px;top:478.0px;transform:scaleX(0.8870);">Select Yes to use the primary keys from the input table if there are no primary key columns in the target table.</div>
<div class="track" style="left:727px;top:150px;width:12px;height:334px;"></div>
<div class="btn" style="left:727px;top:150px;width:12px;height:12px;"><svg style="position:absolute;left:0;top:0" width="10" height="10"><path d="M4.5 1.9L7.4 5.9H1.6z" fill="#000"/></svg></div>
<div class="btn" style="left:727px;top:472px;width:12px;height:12px;"><svg style="position:absolute;left:0;top:0" width="10" height="10"><path d="M1.6 3.9H7.6L4.6 7.8z" fill="#000"/></svg></div>
<div class="btn" style="left:727px;top:162px;width:12px;height:272px;"></div>
</body></html>
